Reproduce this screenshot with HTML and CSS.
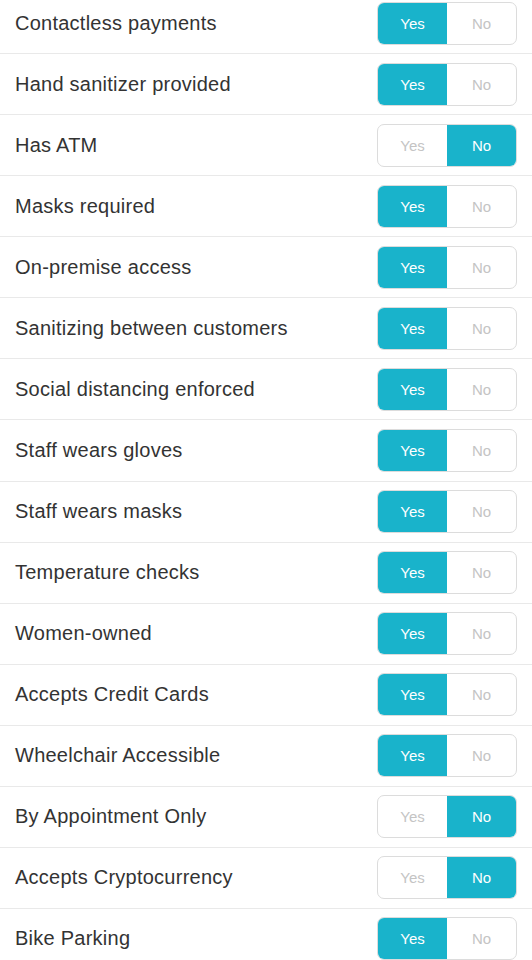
FILE: index.html
```html
<!DOCTYPE html>
<html lang="en">
<head>
  <meta charset="UTF-8" />
  <meta name="viewport" content="width=device-width, initial-scale=1" />
  <title>Amenities</title>
  <link rel="stylesheet" href="styles.css">
</head>
<body>
  <ul class="amenities">
    <li class="row"><span class="label">Contactless payments</span>
      <div class="toggle"><span class="opt on">Yes</span><span class="opt">No</span></div></li>
    <li class="row"><span class="label">Hand sanitizer provided</span>
      <div class="toggle"><span class="opt on">Yes</span><span class="opt">No</span></div></li>
    <li class="row"><span class="label">Has ATM</span>
      <div class="toggle"><span class="opt">Yes</span><span class="opt on">No</span></div></li>
    <li class="row"><span class="label">Masks required</span>
      <div class="toggle"><span class="opt on">Yes</span><span class="opt">No</span></div></li>
    <li class="row"><span class="label">On-premise access</span>
      <div class="toggle"><span class="opt on">Yes</span><span class="opt">No</span></div></li>
    <li class="row"><span class="label">Sanitizing between customers</span>
      <div class="toggle"><span class="opt on">Yes</span><span class="opt">No</span></div></li>
    <li class="row"><span class="label">Social distancing enforced</span>
      <div class="toggle"><span class="opt on">Yes</span><span class="opt">No</span></div></li>
    <li class="row"><span class="label">Staff wears gloves</span>
      <div class="toggle"><span class="opt on">Yes</span><span class="opt">No</span></div></li>
    <li class="row"><span class="label">Staff wears masks</span>
      <div class="toggle"><span class="opt on">Yes</span><span class="opt">No</span></div></li>
    <li class="row"><span class="label">Temperature checks</span>
      <div class="toggle"><span class="opt on">Yes</span><span class="opt">No</span></div></li>
    <li class="row"><span class="label">Women-owned</span>
      <div class="toggle"><span class="opt on">Yes</span><span class="opt">No</span></div></li>
    <li class="row"><span class="label">Accepts Credit Cards</span>
      <div class="toggle"><span class="opt on">Yes</span><span class="opt">No</span></div></li>
    <li class="row"><span class="label">Wheelchair Accessible</span>
      <div class="toggle"><span class="opt on">Yes</span><span class="opt">No</span></div></li>
    <li class="row"><span class="label">By Appointment Only</span>
      <div class="toggle"><span class="opt">Yes</span><span class="opt on">No</span></div></li>
    <li class="row"><span class="label">Accepts Cryptocurrency</span>
      <div class="toggle"><span class="opt">Yes</span><span class="opt on">No</span></div></li>
    <li class="row"><span class="label">Bike Parking</span>
      <div class="toggle"><span class="opt on">Yes</span><span class="opt">No</span></div></li>
  </ul>
</body>
</html>
```

FILE: styles.css
```css
* {
  box-sizing: border-box;
}

body {
  margin: 0;
  background: #fff;
  font-family: "Liberation Sans", Arial, sans-serif;
  color: #333;
  overflow: hidden;
}

.amenities {
  list-style: none;
  margin: -7px 0 0;
  padding: 0;
}

.row {
  height: 61.07px;
  display: flex;
  align-items: center;
  justify-content: space-between;
  padding: 0 15px;
  border-bottom: 1px solid #e9e9e9;
}

.label {
  font-size: 20px;
  letter-spacing: 0.25px;
  color: #333;
}

.toggle {
  display: flex;
  width: 140px;
  height: 43px;
  border: 1px solid #dcdcdc;
  border-radius: 7px;
  overflow: hidden;
}

.opt {
  flex: 1;
  display: flex;
  align-items: center;
  justify-content: center;
  font-size: 15px;
  color: #c4c4c4;
}

.opt.on {
  background: #19b3cb;
  color: #fff;
}
```
